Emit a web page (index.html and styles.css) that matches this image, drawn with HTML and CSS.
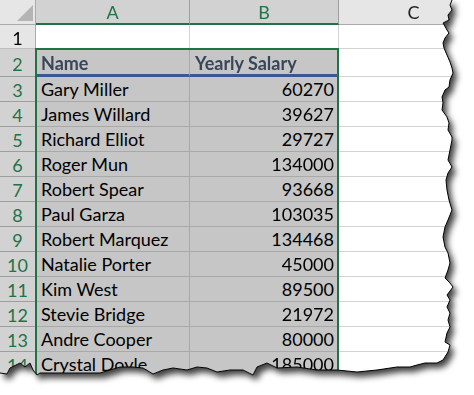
FILE: index.html
```html
<!DOCTYPE html>
<html>
<head>
<meta charset="utf-8">
<link rel="stylesheet" href="styles.css">
</head>
<body>
<div class="page">
  <div class="sheet">
    <div class="grid">
      <div class="corner"><span class="tri"></span></div>
      <div class="colhead sel">A</div>
      <div class="colhead sel">B</div>
      <div class="colhead">C</div>

      <div class="rowhead">1</div><div class="cell"></div><div class="cell"></div><div class="cell"></div>

      <div class="rowhead sel">2</div><div class="cell s th">Name</div><div class="cell s th">Yearly Salary</div><div class="cell"></div>
      <div class="rowhead sel">3</div><div class="cell s">Gary Miller</div><div class="cell s num">60270</div><div class="cell"></div>
      <div class="rowhead sel">4</div><div class="cell s">James Willard</div><div class="cell s num">39627</div><div class="cell"></div>
      <div class="rowhead sel">5</div><div class="cell s">Richard Elliot</div><div class="cell s num">29727</div><div class="cell"></div>
      <div class="rowhead sel">6</div><div class="cell s">Roger Mun</div><div class="cell s num">134000</div><div class="cell"></div>
      <div class="rowhead sel">7</div><div class="cell s">Robert Spear</div><div class="cell s num">93668</div><div class="cell"></div>
      <div class="rowhead sel">8</div><div class="cell s">Paul Garza</div><div class="cell s num">103035</div><div class="cell"></div>
      <div class="rowhead sel">9</div><div class="cell s">Robert Marquez</div><div class="cell s num">134468</div><div class="cell"></div>
      <div class="rowhead sel">10</div><div class="cell s">Natalie Porter</div><div class="cell s num">45000</div><div class="cell"></div>
      <div class="rowhead sel">11</div><div class="cell s">Kim West</div><div class="cell s num">89500</div><div class="cell"></div>
      <div class="rowhead sel">12</div><div class="cell s">Stevie Bridge</div><div class="cell s num">21972</div><div class="cell"></div>
      <div class="rowhead sel">13</div><div class="cell s">Andre Cooper</div><div class="cell s num">80000</div><div class="cell"></div>
      <div class="rowhead sel">14</div><div class="cell s">Crystal Doyle</div><div class="cell s num">185000</div><div class="cell"></div>

      <div class="selbox"></div>
    </div>
  </div>
  <svg class="tear" width="474" height="395" viewBox="0 0 474 395">
    <polyline fill="none" stroke="#000" stroke-width="1" points="452,0 450,5 452,10 448,15 449,20 443,23 447,30 449,33 445,38 443,43 444,48 447,55 450,62 452,68 453,73 450,80 449,87 445,90 442,97 443,103 442,110 447,117 449,123 448,130 452,137 452,140 450,150 448,160 452,167 448,173 446,180 447,190 449,200 452,210 448,220 445,227 443,237 445,247 448,253 450,263 448,270 445,278 450,283 453,287 447,295 450,300 447,307 450,313 448,320 450,327 447,333 445,342 450,345 448,352 443,360 437,363 425,363 417,365 410,367 397,367 377,370 357,372 337,370 317,370 297,367 277,368 267,363 257,367 253,375 243,370 230,370 217,372 207,368 197,367 187,370 173,368 163,370 153,374 143,368 133,367 120,367 100,373 67,373 40,373 37,375 33,370 30,363 25,367 20,363 10,368 7,374 0,373"/>
  </svg>
</div>
</body>
</html>
```
FILE: styles.css
```css
html, body {
  margin: 0;
  padding: 0;
  background: #fff;
}

.page {
  position: relative;
  width: 474px;
  height: 395px;
  overflow: hidden;
}

.sheet {
  filter: drop-shadow(4px 5px 3px rgba(0, 0, 0, 0.75));
}

.grid {
  display: grid;
  grid-template-columns: 36px 154px 149px 150px;
  grid-template-rows: 25px 24px 28px repeat(12, 25px);
  width: 474px;
  height: 395px;
  overflow: hidden;
  position: relative;
  background: #fff;
  font-family: Lato, "Noto Sans", sans-serif;
  font-size: 18px;
  color: #000;
  clip-path: polygon(0 0, 452px 0, 450px 5px, 452px 10px, 448px 15px, 449px 20px, 443px 23px, 447px 30px, 449px 33px, 445px 38px, 443px 43px, 444px 48px, 447px 55px, 450px 62px, 452px 68px, 453px 73px, 450px 80px, 449px 87px, 445px 90px, 442px 97px, 443px 103px, 442px 110px, 447px 117px, 449px 123px, 448px 130px, 452px 137px, 452px 140px, 450px 150px, 448px 160px, 452px 167px, 448px 173px, 446px 180px, 447px 190px, 449px 200px, 452px 210px, 448px 220px, 445px 227px, 443px 237px, 445px 247px, 448px 253px, 450px 263px, 448px 270px, 445px 278px, 450px 283px, 453px 287px, 447px 295px, 450px 300px, 447px 307px, 450px 313px, 448px 320px, 450px 327px, 447px 333px, 445px 342px, 450px 345px, 448px 352px, 443px 360px, 437px 363px, 425px 363px, 417px 365px, 410px 367px, 397px 367px, 377px 370px, 357px 372px, 337px 370px, 317px 370px, 297px 367px, 277px 368px, 267px 363px, 257px 367px, 253px 375px, 243px 370px, 230px 370px, 217px 372px, 207px 368px, 197px 367px, 187px 370px, 173px 368px, 163px 370px, 153px 374px, 143px 368px, 133px 367px, 120px 367px, 100px 373px, 67px 373px, 40px 373px, 37px 375px, 33px 370px, 30px 363px, 25px 367px, 20px 363px, 10px 368px, 7px 374px, 0 373px);
}

.grid > div {
  box-sizing: border-box;
}

.corner {
  background: #e6e6e6;
  border-right: 1px solid #ababab;
  border-bottom: 1px solid #ababab;
  position: relative;
}

.tri {
  position: absolute;
  left: 17px;
  top: 5px;
  width: 16px;
  height: 16px;
  background: #b4b4b4;
  clip-path: polygon(100% 0, 100% 100%, 0 100%);
}

.colhead {
  background: #e6e6e6;
  border-right: 1px solid #ababab;
  border-bottom: 1px solid #ababab;
  display: flex;
  align-items: center;
  justify-content: center;
  color: #222;
  font-size: 18px;
}

.colhead.sel {
  background: #d2d2d2;
  color: #217346;
  border-bottom: 2px solid #217346;
  border-right-color: #9e9e9e;
}

.rowhead {
  background: #e6e6e6;
  border-right: 1px solid #ababab;
  border-bottom: 1px solid #bdbdbd;
  display: flex;
  align-items: center;
  justify-content: center;
  color: #000;
  font-size: 18px;
  padding-top: 2px;
}

.rowhead.sel {
  background: #d2d2d2;
  color: #217346;
  border-bottom-color: #9e9e9e;
}

.cell {
  border-right: 1px solid #d4d4d4;
  border-bottom: 1px solid #d4d4d4;
  display: flex;
  align-items: flex-end;
  padding: 0 4px 1px 5px;
  line-height: 22px;
  white-space: nowrap;
  overflow: hidden;
}

.cell.s {
  background: #c6c6c6;
  border-color: #a9a9a9;
}

.cell.num {
  justify-content: flex-end;
}

.cell.th {
  font-weight: 700;
  color: #38465a;
  border-bottom: 3px solid #3a5896;
  padding-bottom: 0;
}

.selbox {
  position: absolute;
  grid-column: 2 / 4;
  grid-row: 3 / 16;
  top: -1px;
  left: -1px;
  right: 0;
  bottom: 0;
  border: 2px solid #217346;
  pointer-events: none;
}

.tear {
  position: absolute;
  left: 0;
  top: 0;
  pointer-events: none;
}
```
